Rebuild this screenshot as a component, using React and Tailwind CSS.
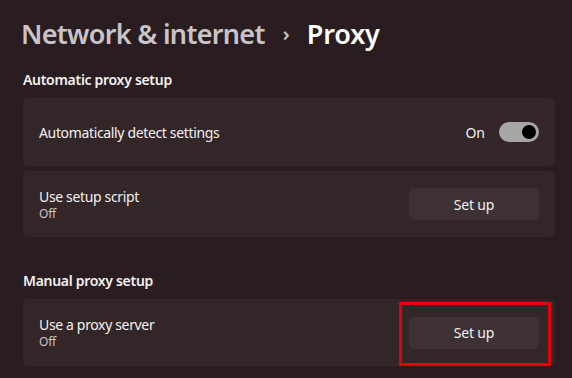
const font = { fontFamily: '"Segoe UI", "Noto Sans", sans-serif' };

function SetupButton() {
  return (
    <button
      type="button"
      className="flex h-8 w-[130px] items-center justify-center rounded-[5px] bg-[#3e3134] text-[14px] tracking-[-0.2px] text-[#f2eeef]"
    >
      Set up
    </button>
  );
}

function SettingRow({ title, subtitle, children }) {
  return (
    <div className="flex items-center justify-between rounded-[5px] bg-[#332628] pl-4 pr-4">
      <div className="flex flex-col pt-[1px]">
        <span className="text-[14px] leading-[18px] tracking-[-0.35px] text-[#f4f0f1]">{title}</span>
        {subtitle && (
          <span className="text-[12px] leading-[16px] tracking-[-0.2px] text-[#c9c2c4]">{subtitle}</span>
        )}
      </div>
      {children}
    </div>
  );
}

export default function App() {
  return (
    <div className="h-[378px] w-[572px] overflow-hidden bg-[#2a1d21]" style={font}>
      <div className="pl-[21px] pr-[17px] pt-[14px]">
        <h1 className="flex items-center text-[27px] font-semibold leading-[40px] tracking-[-0.7px]">
          <span className="text-[#c9c4c6]">Network &amp; internet</span>
          <span className="mx-[18px] text-[20px] text-[#c9c4c6]">›</span>
          <span className="tracking-[-0.2px] text-white">Proxy</span>
        </h1>

        <div className="pl-[2px]">
          <h2 className="mt-[16px] text-[14px] font-semibold leading-[20px] tracking-[-0.3px] text-[#f4f0f1]">
            Automatic proxy setup
          </h2>

          <div className="mt-[8px] flex flex-col gap-[5px]">
            <div className="h-[68px]">
              <SettingRow title="Automatically detect settings">
                <div className="flex h-[68px] items-center gap-[14px]">
                  <span className="text-[14px] text-[#f4f0f1]">On</span>
                  <div className="flex h-5 w-10 items-center justify-end rounded-full bg-[#a9a7a4] pr-[3px]">
                    <div className="h-[14px] w-[14px] rounded-full bg-black" />
                  </div>
                </div>
              </SettingRow>
            </div>
            <div className="h-[66px]">
              <SettingRow title="Use setup script" subtitle="Off">
                <div className="flex h-[66px] items-center">
                  <SetupButton />
                </div>
              </SettingRow>
            </div>
          </div>

          <h2 className="mt-[34px] text-[14px] font-semibold leading-[20px] tracking-[-0.3px] text-[#f4f0f1]">
            Manual proxy setup
          </h2>

          <div className="mt-[8px] h-[67px]">
            <SettingRow title="Use a proxy server" subtitle="Off">
              <div className="relative flex h-[67px] items-center">
                <SetupButton />
                <div className="pointer-events-none absolute -left-[10px] top-[3px] h-[64px] w-[152px] border-[3px] border-[#e3000b]" />
              </div>
            </SettingRow>
          </div>
        </div>
      </div>
    </div>
  );
}
